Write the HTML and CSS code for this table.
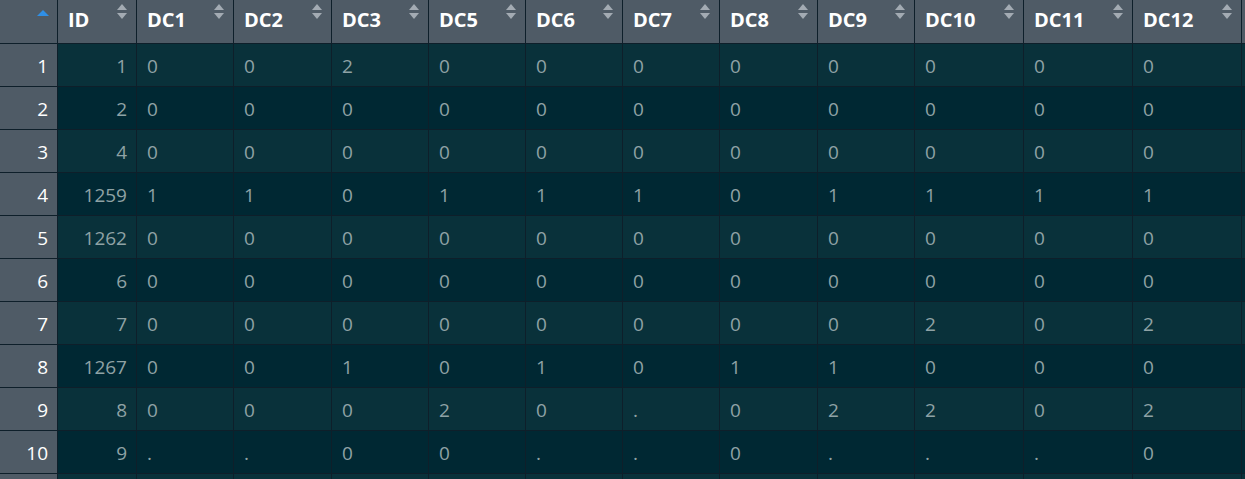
FILE: index.html
```html
<!DOCTYPE html>
<html>
<head>
<meta charset="utf-8">
<link rel="stylesheet" href="styles.css">
</head>
<body>
<div class="grid">
  <div class="hd rn"><span class="asc"></span></div>
  <div class="hd">ID<span class="sort"></span></div>
  <div class="hd">DC1<span class="sort"></span></div>
  <div class="hd">DC2<span class="sort"></span></div>
  <div class="hd">DC3<span class="sort"></span></div>
  <div class="hd">DC5<span class="sort"></span></div>
  <div class="hd">DC6<span class="sort"></span></div>
  <div class="hd">DC7<span class="sort"></span></div>
  <div class="hd">DC8<span class="sort"></span></div>
  <div class="hd">DC9<span class="sort"></span></div>
  <div class="hd">DC10<span class="sort"></span></div>
  <div class="hd">DC11<span class="sort"></span></div>
  <div class="hd">DC12<span class="sort"></span></div>
  <div class="hd"></div>

  <div class="row odd"><div class="n">1</div><div class="c r">1</div><div class="c">0</div><div class="c">0</div><div class="c">2</div><div class="c">0</div><div class="c">0</div><div class="c">0</div><div class="c">0</div><div class="c">0</div><div class="c">0</div><div class="c">0</div><div class="c">0</div><div class="c"></div></div>
  <div class="row even"><div class="n">2</div><div class="c r">2</div><div class="c">0</div><div class="c">0</div><div class="c">0</div><div class="c">0</div><div class="c">0</div><div class="c">0</div><div class="c">0</div><div class="c">0</div><div class="c">0</div><div class="c">0</div><div class="c">0</div><div class="c"></div></div>
  <div class="row odd"><div class="n">3</div><div class="c r">4</div><div class="c">0</div><div class="c">0</div><div class="c">0</div><div class="c">0</div><div class="c">0</div><div class="c">0</div><div class="c">0</div><div class="c">0</div><div class="c">0</div><div class="c">0</div><div class="c">0</div><div class="c"></div></div>
  <div class="row even"><div class="n">4</div><div class="c r">1259</div><div class="c">1</div><div class="c">1</div><div class="c">0</div><div class="c">1</div><div class="c">1</div><div class="c">1</div><div class="c">0</div><div class="c">1</div><div class="c">1</div><div class="c">1</div><div class="c">1</div><div class="c"></div></div>
  <div class="row odd"><div class="n">5</div><div class="c r">1262</div><div class="c">0</div><div class="c">0</div><div class="c">0</div><div class="c">0</div><div class="c">0</div><div class="c">0</div><div class="c">0</div><div class="c">0</div><div class="c">0</div><div class="c">0</div><div class="c">0</div><div class="c"></div></div>
  <div class="row even"><div class="n">6</div><div class="c r">6</div><div class="c">0</div><div class="c">0</div><div class="c">0</div><div class="c">0</div><div class="c">0</div><div class="c">0</div><div class="c">0</div><div class="c">0</div><div class="c">0</div><div class="c">0</div><div class="c">0</div><div class="c"></div></div>
  <div class="row odd"><div class="n">7</div><div class="c r">7</div><div class="c">0</div><div class="c">0</div><div class="c">0</div><div class="c">0</div><div class="c">0</div><div class="c">0</div><div class="c">0</div><div class="c">0</div><div class="c">2</div><div class="c">0</div><div class="c">2</div><div class="c"></div></div>
  <div class="row even"><div class="n">8</div><div class="c r">1267</div><div class="c">0</div><div class="c">0</div><div class="c">1</div><div class="c">0</div><div class="c">1</div><div class="c">0</div><div class="c">1</div><div class="c">1</div><div class="c">0</div><div class="c">0</div><div class="c">0</div><div class="c"></div></div>
  <div class="row odd"><div class="n">9</div><div class="c r">8</div><div class="c">0</div><div class="c">0</div><div class="c">0</div><div class="c">2</div><div class="c">0</div><div class="c">.</div><div class="c">0</div><div class="c">2</div><div class="c">2</div><div class="c">0</div><div class="c">2</div><div class="c"></div></div>
  <div class="row even"><div class="n">10</div><div class="c r">9</div><div class="c">.</div><div class="c">.</div><div class="c">0</div><div class="c">0</div><div class="c">.</div><div class="c">.</div><div class="c">0</div><div class="c">.</div><div class="c">.</div><div class="c">.</div><div class="c">0</div><div class="c"></div></div>
  <div class="row odd stub"><div class="n"></div><div class="c r"></div><div class="c"></div><div class="c"></div><div class="c"></div><div class="c"></div><div class="c"></div><div class="c"></div><div class="c"></div><div class="c"></div><div class="c"></div><div class="c"></div><div class="c"></div><div class="c"></div></div>
</div>
</body>
</html>
```
FILE: styles.css
```css
html, body { margin: 0; padding: 0; }
body {
  width: 1245px; height: 479px; overflow: hidden;
  background: #0e1f2a;
  font-family: "Open Sans", "Noto Sans", sans-serif;
}
.grid {
  display: grid;
  grid-template-columns: 57px 78px 96px 97px 96px 96px 96px 96px 97px 96px 108px 108px 108px 3px;
  grid-template-rows: 43px repeat(10, 42px) 5px;
  gap: 1px;
  background: #0e1f2a;
  width: 1245px;
  height: 479px;
  overflow: hidden;
}
.hd {
  position: relative;
  background: #4f5b66;
  color: #fff;
  font-weight: 700;
  font-size: 20px;
  line-height: 27px;
  padding: 6px 0 0 10px;
  white-space: nowrap;
  overflow: hidden;
}
.sort {
  position: absolute; right: 8px; top: 4px;
  width: 11px; height: 15px;
}
.sort::before, .sort::after {
  content: ""; position: absolute; left: 0;
  border-left: 5.5px solid transparent; border-right: 5.5px solid transparent;
}
.sort::before { top: 0; border-bottom: 6px solid #a3abb3; }
.sort::after { bottom: 0; border-top: 6px solid #a3abb3; }
.asc {
  position: absolute; left: 37px; top: 10px;
  border-left: 6px solid transparent; border-right: 6px solid transparent;
  border-bottom: 6px solid #2f8fe6;
}
.row { display: contents; }
.n, .c {
  font-size: 19px;
  line-height: 26px;
  padding-top: 9px;
  white-space: nowrap;
  overflow: hidden;
}
.stub .n, .stub .c { padding-top: 0; line-height: 0; }
.n {
  background: #4f5b66;
  color: #fff;
  text-align: right;
  padding-right: 9px;
}
.c {
  color: #8fa2a5;
  padding-left: 10px;
}
.c.r { text-align: right; padding-left: 0; padding-right: 9px; }
.odd .c { background: #09313a; }
.even .c { background: #002833; }
```
